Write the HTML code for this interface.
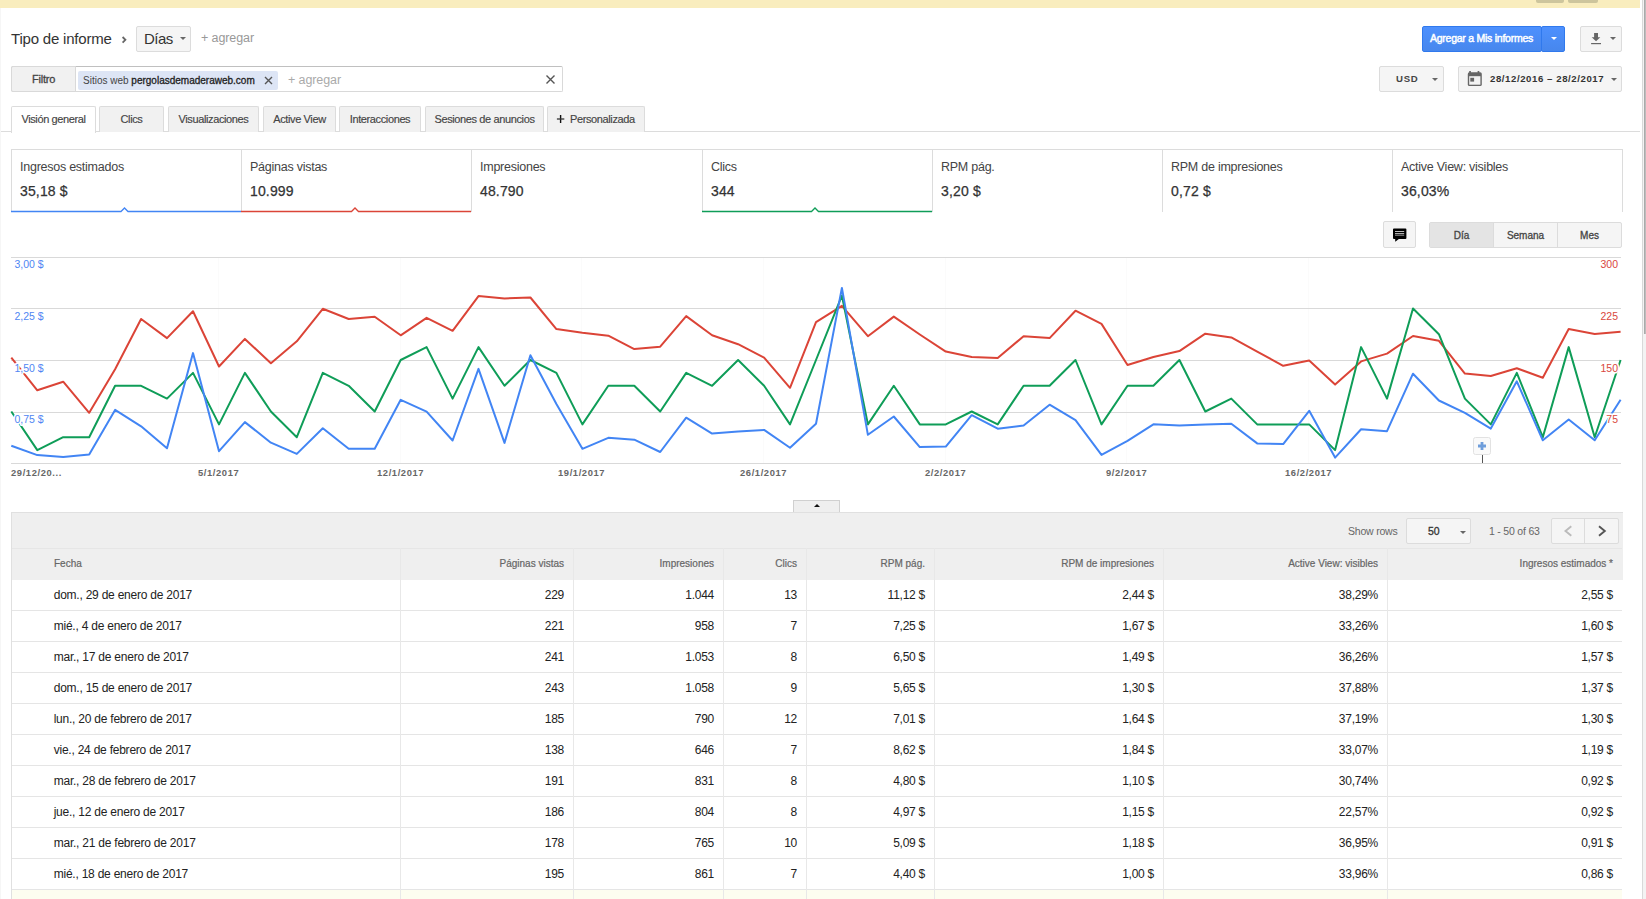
<!DOCTYPE html>
<html><head><meta charset="utf-8">
<style>
*{box-sizing:border-box;margin:0;padding:0}
html,body{width:1646px;height:899px;overflow:hidden;background:#fff;font-family:"Liberation Sans",sans-serif;color:#222}
.a{position:absolute;white-space:nowrap}
.m{-webkit-text-stroke:0.3px currentColor}
.topbar{position:absolute;left:0;top:0;width:1640px;height:8px;background:#f9edbe}
.tbtn{position:absolute;top:-4px;height:7px;background:#cdc59d;border-radius:2px}
.sb{position:absolute;left:1642px;top:0;width:4px;height:899px;background:#f3f3f3;border-left:1px solid #d9d9d9}
.sbthumb{position:absolute;left:1644px;top:0;width:2px;height:334px;background:#bdbdbd;border-left:1px solid #aaa}
.btn{position:absolute;background:#f5f5f5;border:1px solid #dcdcdc;border-radius:2px}
.caret{position:absolute;width:0;height:0;border-left:3px solid transparent;border-right:3px solid transparent;border-top:3.3px solid #666;margin-top:0.7px;margin-left:0.5px}
.tab{position:absolute;top:106px;height:26px;border-radius:2px 2px 0 0;background:#f1f1f1;border:1px solid #dcdcdc;border-bottom:none;font-size:11px;color:#444;text-align:center;line-height:25px;letter-spacing:-0.38px;-webkit-text-stroke:0.15px #444}
.tab.on{background:#fff;height:27px}
.card{position:absolute;top:149px;height:63px;border-left:1px solid #dcdcdc}
.card .l{position:absolute;left:8px;top:11px;font-size:12.5px;color:#444;letter-spacing:-0.25px}
.card .v{position:absolute;left:8px;top:34px;font-size:14px;color:#333;letter-spacing:0.15px;-webkit-text-stroke:0.25px #333}
.ylab{position:absolute;font-size:10.5px;color:#4f86f3;text-shadow:0 0 1px #fff,0 0 1px #fff,0 0 1px #fff,0 0 2px #fff}
.rlab{position:absolute;font-size:10.5px;color:#d9473d;text-align:right;text-shadow:0 0 1px #fff,0 0 1px #fff,0 0 1px #fff,0 0 2px #fff}
.xlab{position:absolute;top:467.2px;font-size:9.4px;font-weight:bold;color:#666;letter-spacing:0.6px}
.tr{position:absolute;left:11px;width:1611px;height:31px;border-bottom:1px solid #e5e5e5;background:#fff}
.tr.hl{background:#fdfdf0}
.td{position:absolute;font-size:12px;line-height:31px;color:#222;letter-spacing:-0.23px}
.td.date{left:53.7px}
.td.num{letter-spacing:-0.25px}
.th{position:absolute;top:548px;line-height:31px;font-size:10px;color:#666;-webkit-text-stroke:0.2px #666}
.vsep{position:absolute;top:548px;width:1px;height:351px;background:#e8e8e8}
</style></head>
<body>
<div class="topbar"></div>
<div class="tbtn" style="left:1536px;width:28px"></div>
<div class="tbtn" style="left:1568px;width:30px"></div>

<!-- header row -->
<div class="a" style="left:11px;top:29px;font-size:15px;color:#333;line-height:20px;letter-spacing:-0.2px">Tipo de informe</div>
<svg style="position:absolute;left:120px;top:34px" width="8" height="11" viewBox="0 0 8 11"><path d="M2.6 3L5.4 5.8L2.6 8.6" fill="none" stroke="#666" stroke-width="1.8"/></svg>
<div class="btn" style="left:136px;top:26px;width:55px;height:26px"></div>
<div class="a" style="left:144px;top:29px;font-size:15px;color:#333;line-height:20px;letter-spacing:-0.5px">Días</div>
<div class="caret" style="left:179.5px;top:36.5px"></div>
<div class="a" style="left:201px;top:30px;font-size:12.5px;color:#999;line-height:16px;letter-spacing:-0.1px">+ agregar</div>

<div style="position:absolute;left:1422px;top:26px;width:120px;height:26px;background:linear-gradient(#4d90fe,#4787ed);border:1px solid #3079ed;border-radius:2px"></div>
<div style="position:absolute;left:1541px;top:26px;width:24px;height:26px;background:linear-gradient(#4d90fe,#4787ed);border:1px solid #3079ed;border-radius:2px"></div>
<div class="a" style="left:1430px;top:31px;font-size:10.5px;color:#fff;line-height:14px;letter-spacing:-0.25px;-webkit-text-stroke:0.45px #fff">Agregar a Mis informes</div>
<div class="caret" style="left:1550.5px;top:36.3px;border-top-color:#fff"></div>
<div class="btn" style="left:1580px;top:26px;width:42px;height:26px"></div>
<svg style="position:absolute;left:1590px;top:31px" width="14" height="16" viewBox="0 0 14 16"><path d="M4.1 2h3.9v4.3h2.3L6.05 10.2L1.7 6.3h2.4z" fill="#666"/><rect x="1.1" y="12" width="9.9" height="1.2" fill="#666"/></svg>
<div class="caret" style="left:1609.3px;top:36px"></div>

<!-- filter row -->
<div style="position:absolute;left:11px;top:66px;width:552px;height:26px;border:1px solid #d9d9d9;border-top-color:#c0c0c0;border-radius:2px;background:#fff"></div>
<div style="position:absolute;left:11px;top:66px;width:65px;height:26px;background:#f1f1f1;border:1px solid #d9d9d9;border-radius:2px 0 0 2px"></div>
<div class="a m" style="left:32px;top:72px;font-size:11px;color:#444;line-height:14px;letter-spacing:-0.2px">Filtro</div>
<div style="position:absolute;left:78px;top:71px;width:200px;height:19px;background:#dde5f5;border-radius:2px"></div>
<div class="a" style="left:83px;top:74px;font-size:10px;color:#444;line-height:13px">Sitios web <span class="m" style="color:#222">pergolasdemaderaweb.com</span></div>
<svg style="position:absolute;left:264px;top:76px" width="9" height="9" viewBox="0 0 9 9"><path d="M1 1L8 8M8 1L1 8" stroke="#555" stroke-width="1.4"/></svg>
<div class="a" style="left:288px;top:72px;font-size:12.5px;color:#aaa;line-height:16px;letter-spacing:-0.1px">+ agregar</div>
<svg style="position:absolute;left:546px;top:75px" width="9" height="9" viewBox="0 0 9 9"><path d="M0.5 0.5L8.5 8.5M8.5 0.5L0.5 8.5" stroke="#555" stroke-width="1.4"/></svg>

<div class="btn" style="left:1379px;top:66px;width:65px;height:26px"></div>
<div class="a" style="left:1396px;top:72px;font-size:9.6px;font-weight:bold;color:#444;line-height:13px;letter-spacing:0.75px">USD</div>
<div class="caret" style="left:1431.3px;top:77px"></div>
<div class="btn" style="left:1458px;top:66px;width:164px;height:26px"></div>
<svg style="position:absolute;left:1467px;top:70px" width="16" height="17" viewBox="0 0 16 17"><rect x="2.2" y="1" width="1.7" height="2.5" fill="#666"/><rect x="10.6" y="1" width="1.7" height="2.5" fill="#666"/><rect x="0.8" y="2.3" width="14" height="13.8" rx="1.6" fill="#666"/><rect x="2.2" y="6.2" width="11.2" height="8.5" fill="#f3f3f3"/><rect x="3.3" y="7.8" width="3.8" height="3.8" fill="#666"/></svg>
<div class="a" style="left:1490px;top:72px;font-size:9.6px;font-weight:bold;color:#333;line-height:13px;letter-spacing:0.58px">28/12/2016 – 28/2/2017</div>
<div class="caret" style="left:1610px;top:77px"></div>

<!-- tabs -->
<div style="position:absolute;left:0;top:131px;width:1640px;height:1px;background:#dcdcdc"></div>
<div style="position:absolute;left:0;top:8px;width:1px;height:891px;background:#f6f6f6"></div>
<div class="tab on" style="left:11px;width:85px">Visión general</div>
<div class="tab" style="left:99px;width:65px">Clics</div>
<div class="tab" style="left:168px;width:91px">Visualizaciones</div>
<div class="tab" style="left:263px;width:73px">Active View</div>
<div class="tab" style="left:339px;width:82px">Interacciones</div>
<div class="tab" style="left:425px;width:119px">Sesiones de anuncios</div>
<div class="tab" style="left:547px;width:98px"></div>
<svg style="position:absolute;left:556px;top:114px" width="9" height="10" viewBox="0 0 9 10"><path d="M4.6 1v8" stroke="#111" stroke-width="1.4"/><path d="M0.9 5h7.4" stroke="#333" stroke-width="1.3"/></svg>
<div class="tab" style="left:570px;width:auto;top:107px;border:none;background:none;text-align:left">Personalizada</div>

<!-- metric cards -->
<div style="position:absolute;left:11px;top:149px;width:1611px;height:1px;background:#dcdcdc"></div>
<div class="card" style="left:11px;width:230px"><div class="l">Ingresos estimados</div><div class="v">35,18 $</div></div>
<div class="card" style="left:241px;width:230px"><div class="l">Páginas vistas</div><div class="v">10.999</div></div>
<div class="card" style="left:471px;width:231px"><div class="l">Impresiones</div><div class="v">48.790</div></div>
<div class="card" style="left:702px;width:230px"><div class="l">Clics</div><div class="v">344</div></div>
<div class="card" style="left:932px;width:230px"><div class="l">RPM pág.</div><div class="v">3,20 $</div></div>
<div class="card" style="left:1162px;width:230px"><div class="l">RPM de impresiones</div><div class="v">0,72 $</div></div>
<div class="card" style="left:1392px;width:231px;border-right:1px solid #dcdcdc"><div class="l">Active View: visibles</div><div class="v">36,03%</div></div>
<svg style="position:absolute;left:0;top:200px" width="1646" height="16">
<path d="M11 11.5H121L124.5 8L128 11.5H241" fill="none" stroke="#4285f4" stroke-width="1.3"/>
<path d="M241 11.5H351.5L355 8L358.5 11.5H471" fill="none" stroke="#db4437" stroke-width="1.3"/>
<path d="M702 11.5H811.5L815 8L818.5 11.5H932" fill="none" stroke="#0f9d58" stroke-width="1.3"/>
</svg>

<!-- chart controls -->
<div class="btn" style="left:1383px;top:221px;width:33px;height:27px"></div>
<svg style="position:absolute;left:1392px;top:227px" width="16" height="16" viewBox="0 0 16 16"><path d="M1.9 1.6h11.6a0.9 0.9 0 0 1 .9.9v8.6a0.9 0.9 0 0 1-.9.9H6.9L3.2 14.8V12H1.9a0.9 0.9 0 0 1-.9-.9V2.5a0.9 0.9 0 0 1 .9-.9z" fill="#000"/><path d="M3 4.5h9.2M3 6.6h9.2" stroke="#d0d0d0" stroke-width="0.9"/><path d="M3 8.2h9.2" stroke="#888" stroke-width="1.1"/></svg>
<div class="btn" style="left:1429px;top:222px;width:193px;height:26px"></div>
<div style="position:absolute;left:1430px;top:223px;width:64px;height:24px;background:#e4e4e4"></div>
<div style="position:absolute;left:1493px;top:222px;width:1px;height:26px;background:#dcdcdc"></div>
<div style="position:absolute;left:1557px;top:222px;width:1px;height:26px;background:#dcdcdc"></div>
<div class="a m" style="left:1430px;top:229px;width:63px;text-align:center;font-size:10px;color:#444;line-height:14px">Día</div>
<div class="a m" style="left:1494px;top:229px;width:63px;text-align:center;font-size:10px;color:#444;line-height:14px">Semana</div>
<div class="a m" style="left:1558px;top:229px;width:63px;text-align:center;font-size:10px;color:#444;line-height:14px">Mes</div>

<!-- chart -->
<svg style="position:absolute;left:0;top:0" width="1646" height="899">
<g fill="#fbfbfb"><rect x="218" y="258" width="1" height="205"/><rect x="400" y="258" width="1" height="205"/><rect x="581" y="258" width="1" height="205"/><rect x="763" y="258" width="1" height="205"/><rect x="945" y="258" width="1" height="205"/><rect x="1126" y="258" width="1" height="205"/><rect x="1308" y="258" width="1" height="205"/></g>
<g fill="#d9d9d9"><rect x="11" y="257" width="1610" height="1"/><rect x="11" y="308" width="1610" height="1"/><rect x="11" y="360" width="1610" height="1"/><rect x="11" y="412" width="1610" height="1"/><rect x="11" y="463" width="1610" height="1"/></g>
<polyline fill="none" stroke="#db4437" stroke-width="2" stroke-linejoin="round" points="11.3,357.7 37.3,390.3 63.2,381.7 89.2,412.8 115.1,369.2 141.1,319.0 167.0,338.1 193.0,311.2 219.0,366.5 244.9,338.9 270.9,363.3 296.8,341.3 322.8,308.8 348.7,319.0 374.7,316.8 400.7,335.3 426.6,317.8 452.6,330.8 478.5,296.1 504.5,298.5 530.4,297.5 556.4,329.1 582.4,332.7 608.3,335.7 634.3,349.1 660.2,346.7 686.2,316.1 712.1,335.2 738.1,344.2 764.1,357.7 790.0,387.8 816.0,322.2 841.9,305.8 867.9,336.2 893.8,316.6 919.8,334.5 945.8,351.6 971.7,357.0 997.7,358.0 1023.6,336.2 1049.6,338.1 1075.5,310.7 1101.5,323.9 1127.5,365.0 1153.4,357.0 1179.4,351.1 1205.3,333.7 1231.3,337.4 1257.2,351.6 1283.2,365.8 1309.2,360.6 1335.1,384.6 1361.1,361.4 1387.0,353.6 1413.0,336.0 1438.9,340.8 1464.9,373.6 1490.8,376.0 1516.8,368.2 1542.8,377.7 1568.7,329.0 1594.7,333.9 1620.6,331.8"/>
<polyline fill="none" stroke="#0f9d58" stroke-width="2" stroke-linejoin="round" points="11.3,411.5 37.3,450.1 63.2,437.2 89.2,437.2 115.1,385.8 141.1,385.8 167.0,398.6 193.0,372.9 219.0,424.4 244.9,372.9 270.9,411.5 296.8,437.2 322.8,372.9 348.7,385.8 374.7,411.5 400.7,360.0 426.6,347.1 452.6,398.6 478.5,347.1 504.5,385.8 530.4,360.0 556.4,372.9 582.4,424.4 608.3,385.8 634.3,385.8 660.2,411.5 686.2,372.9 712.1,385.8 738.1,360.0 764.1,385.8 790.0,424.4 816.0,360.0 841.9,295.6 867.9,424.4 893.8,385.8 919.8,424.4 945.8,424.4 971.7,411.5 997.7,424.4 1023.6,385.8 1049.6,385.8 1075.5,360.0 1101.5,424.4 1127.5,385.8 1153.4,385.8 1179.4,360.0 1205.3,411.5 1231.3,398.6 1257.2,424.4 1283.2,424.4 1309.2,424.4 1335.1,450.1 1361.1,347.1 1387.0,398.6 1413.0,308.5 1438.9,334.2 1464.9,398.6 1490.8,424.4 1516.8,372.9 1542.8,437.2 1568.7,347.1 1594.7,437.2 1620.6,360.0"/>
<polyline fill="none" stroke="#4285f4" stroke-width="2" stroke-linejoin="round" points="11.3,445.8 37.3,455.1 63.2,457.1 89.2,454.4 115.1,409.9 141.1,426.3 167.0,448.3 193.0,353.1 219.0,451.2 244.9,422.1 270.9,442.7 296.8,453.9 322.8,428.2 348.7,448.8 374.7,448.8 400.7,399.8 426.6,411.6 452.6,440.5 478.5,368.9 504.5,442.9 530.4,355.2 556.4,404.0 582.4,448.8 608.3,437.8 634.3,439.7 660.2,452.0 686.2,417.7 712.1,433.6 738.1,431.6 764.1,429.9 790.0,447.8 816.0,423.8 841.9,287.9 867.9,434.8 893.8,416.5 919.8,447.1 945.8,446.6 971.7,415.2 997.7,428.7 1023.6,425.5 1049.6,404.7 1075.5,420.1 1101.5,454.9 1127.5,440.9 1153.4,424.3 1179.4,425.5 1205.3,424.5 1231.3,423.8 1257.2,443.4 1283.2,444.1 1309.2,410.8 1335.1,457.6 1361.1,429.2 1387.0,431.2 1413.0,373.7 1438.9,400.5 1464.9,412.8 1490.8,428.6 1516.8,381.3 1542.8,440.3 1568.7,419.5 1594.7,440.3 1620.6,399.8"/>

<rect x="1473.5" y="437.5" width="17" height="17" rx="2" fill="#fafafa" stroke="#e2e2e2"/>
<path d="M1482 442v8M1478 446h8" stroke="#6f9edb" stroke-width="2.8"/>
<rect x="1482" y="455" width="1" height="8" fill="#555"/>
</svg>
<svg style="position:absolute;left:0;top:0" width="1646" height="899">
<g font-family="Liberation Sans" font-size="10.5" stroke="#fff" stroke-width="3" stroke-linejoin="round" paint-order="stroke">
<g fill="#4f86f3"><text x="14.5" y="268.3">3,00 $</text><text x="14.5" y="320.2">2,25 $</text><text x="14.5" y="371.8">1,50 $</text><text x="14.5" y="422.8">0,75 $</text></g>
<g fill="#d9473d" text-anchor="end"><text x="1618" y="268.3">300</text><text x="1618" y="320.2">225</text><text x="1618" y="371.8">150</text><text x="1618" y="422.8">75</text></g>
</g></svg>
<div class="xlab" style="left:11px">29/12/20...</div>
<div class="xlab" style="left:198px">5/1/2017</div>
<div class="xlab" style="left:377px">12/1/2017</div>
<div class="xlab" style="left:558px">19/1/2017</div>
<div class="xlab" style="left:740px">26/1/2017</div>
<div class="xlab" style="left:925px">2/2/2017</div>
<div class="xlab" style="left:1106px">9/2/2017</div>
<div class="xlab" style="left:1285px">16/2/2017</div>

<!-- table -->
<div style="position:absolute;left:793px;top:500px;width:47px;height:13px;background:#efefef;border:1px solid #d0d0d0;border-bottom:none"></div>
<div style="position:absolute;left:813.5px;top:503.5px;width:0;height:0;border-left:3.5px solid transparent;border-right:3.5px solid transparent;border-bottom:3.5px solid #111"></div>
<div style="position:absolute;left:11px;top:512px;width:1612px;height:68px;background:#efefef;border-top:1px solid #e0e0e0"></div>
<div style="position:absolute;left:11px;top:548px;width:1611px;height:1px;background:#e6e6e6"></div>
<div style="position:absolute;left:11px;top:512px;width:1px;height:387px;background:#e0e0e0"></div>
<div class="a" style="left:1348px;top:523.5px;font-size:10.5px;color:#666;line-height:14px;letter-spacing:-0.2px">Show rows</div>
<div class="btn" style="left:1406px;top:518px;width:65px;height:26px"></div>
<div class="a m" style="left:1428px;top:524px;font-size:10.5px;color:#333;line-height:14px">50</div>
<div class="caret" style="left:1459px;top:530px"></div>
<div class="a" style="left:1489px;top:523.5px;font-size:10.5px;color:#666;line-height:14px;letter-spacing:-0.2px">1 - 50 of 63</div>
<div class="btn" style="left:1551px;top:518px;width:68px;height:26px"></div>
<div style="position:absolute;left:1584px;top:518px;width:1px;height:26px;background:#dcdcdc"></div>
<svg style="position:absolute;left:1560px;top:522px" width="60" height="18" viewBox="0 0 60 18"><path d="M11.3 4.3L5.5 9L11.3 13.7" fill="none" stroke="#bbb" stroke-width="1.9"/><path d="M39 4.3L44.8 9L39 13.7" fill="none" stroke="#555" stroke-width="1.9"/></svg>
<div class="tr" style="top:580px"></div>
<div class="td date" style="top:580px">dom., 29 de enero de 2017</div>
<div class="td num" style="top:580px;right:1082px">229</div>
<div class="td num" style="top:580px;right:932px">1.044</div>
<div class="td num" style="top:580px;right:849px">13</div>
<div class="td num" style="top:580px;right:721px">11,12 $</div>
<div class="td num" style="top:580px;right:492px">2,44 $</div>
<div class="td num" style="top:580px;right:268px">38,29%</div>
<div class="td num" style="top:580px;right:33px">2,55 $</div>
<div class="tr" style="top:611px"></div>
<div class="td date" style="top:611px">mié., 4 de enero de 2017</div>
<div class="td num" style="top:611px;right:1082px">221</div>
<div class="td num" style="top:611px;right:932px">958</div>
<div class="td num" style="top:611px;right:849px">7</div>
<div class="td num" style="top:611px;right:721px">7,25 $</div>
<div class="td num" style="top:611px;right:492px">1,67 $</div>
<div class="td num" style="top:611px;right:268px">33,26%</div>
<div class="td num" style="top:611px;right:33px">1,60 $</div>
<div class="tr" style="top:642px"></div>
<div class="td date" style="top:642px">mar., 17 de enero de 2017</div>
<div class="td num" style="top:642px;right:1082px">241</div>
<div class="td num" style="top:642px;right:932px">1.053</div>
<div class="td num" style="top:642px;right:849px">8</div>
<div class="td num" style="top:642px;right:721px">6,50 $</div>
<div class="td num" style="top:642px;right:492px">1,49 $</div>
<div class="td num" style="top:642px;right:268px">36,26%</div>
<div class="td num" style="top:642px;right:33px">1,57 $</div>
<div class="tr" style="top:673px"></div>
<div class="td date" style="top:673px">dom., 15 de enero de 2017</div>
<div class="td num" style="top:673px;right:1082px">243</div>
<div class="td num" style="top:673px;right:932px">1.058</div>
<div class="td num" style="top:673px;right:849px">9</div>
<div class="td num" style="top:673px;right:721px">5,65 $</div>
<div class="td num" style="top:673px;right:492px">1,30 $</div>
<div class="td num" style="top:673px;right:268px">37,88%</div>
<div class="td num" style="top:673px;right:33px">1,37 $</div>
<div class="tr" style="top:704px"></div>
<div class="td date" style="top:704px">lun., 20 de febrero de 2017</div>
<div class="td num" style="top:704px;right:1082px">185</div>
<div class="td num" style="top:704px;right:932px">790</div>
<div class="td num" style="top:704px;right:849px">12</div>
<div class="td num" style="top:704px;right:721px">7,01 $</div>
<div class="td num" style="top:704px;right:492px">1,64 $</div>
<div class="td num" style="top:704px;right:268px">37,19%</div>
<div class="td num" style="top:704px;right:33px">1,30 $</div>
<div class="tr" style="top:735px"></div>
<div class="td date" style="top:735px">vie., 24 de febrero de 2017</div>
<div class="td num" style="top:735px;right:1082px">138</div>
<div class="td num" style="top:735px;right:932px">646</div>
<div class="td num" style="top:735px;right:849px">7</div>
<div class="td num" style="top:735px;right:721px">8,62 $</div>
<div class="td num" style="top:735px;right:492px">1,84 $</div>
<div class="td num" style="top:735px;right:268px">33,07%</div>
<div class="td num" style="top:735px;right:33px">1,19 $</div>
<div class="tr" style="top:766px"></div>
<div class="td date" style="top:766px">mar., 28 de febrero de 2017</div>
<div class="td num" style="top:766px;right:1082px">191</div>
<div class="td num" style="top:766px;right:932px">831</div>
<div class="td num" style="top:766px;right:849px">8</div>
<div class="td num" style="top:766px;right:721px">4,80 $</div>
<div class="td num" style="top:766px;right:492px">1,10 $</div>
<div class="td num" style="top:766px;right:268px">30,74%</div>
<div class="td num" style="top:766px;right:33px">0,92 $</div>
<div class="tr" style="top:797px"></div>
<div class="td date" style="top:797px">jue., 12 de enero de 2017</div>
<div class="td num" style="top:797px;right:1082px">186</div>
<div class="td num" style="top:797px;right:932px">804</div>
<div class="td num" style="top:797px;right:849px">8</div>
<div class="td num" style="top:797px;right:721px">4,97 $</div>
<div class="td num" style="top:797px;right:492px">1,15 $</div>
<div class="td num" style="top:797px;right:268px">22,57%</div>
<div class="td num" style="top:797px;right:33px">0,92 $</div>
<div class="tr" style="top:828px"></div>
<div class="td date" style="top:828px">mar., 21 de febrero de 2017</div>
<div class="td num" style="top:828px;right:1082px">178</div>
<div class="td num" style="top:828px;right:932px">765</div>
<div class="td num" style="top:828px;right:849px">10</div>
<div class="td num" style="top:828px;right:721px">5,09 $</div>
<div class="td num" style="top:828px;right:492px">1,18 $</div>
<div class="td num" style="top:828px;right:268px">36,95%</div>
<div class="td num" style="top:828px;right:33px">0,91 $</div>
<div class="tr" style="top:859px"></div>
<div class="td date" style="top:859px">mié., 18 de enero de 2017</div>
<div class="td num" style="top:859px;right:1082px">195</div>
<div class="td num" style="top:859px;right:932px">861</div>
<div class="td num" style="top:859px;right:849px">7</div>
<div class="td num" style="top:859px;right:721px">4,40 $</div>
<div class="td num" style="top:859px;right:492px">1,00 $</div>
<div class="td num" style="top:859px;right:268px">33,96%</div>
<div class="td num" style="top:859px;right:33px">0,86 $</div>
<div class="tr hl" style="top:890px"></div>
<div class="th" style="left:54px">Fecha</div>
<div class="th" style="right:1082px">Páginas vistas</div>
<div class="th" style="right:932px">Impresiones</div>
<div class="th" style="right:849px">Clics</div>
<div class="th" style="right:721px">RPM pág.</div>
<div class="th" style="right:492px">RPM de impresiones</div>
<div class="th" style="right:268px">Active View: visibles</div>
<div class="th" style="right:33px">Ingresos estimados *</div>
<div class="vsep" style="left:400px"></div>
<div class="vsep" style="left:573px"></div>
<div class="vsep" style="left:723px"></div>
<div class="vsep" style="left:806px"></div>
<div class="vsep" style="left:934px"></div>
<div class="vsep" style="left:1163px"></div>
<div class="vsep" style="left:1387px"></div>
<div style="position:absolute;left:11px;top:512px;width:1px;height:387px;background:#e0e0e0"></div>

<div class="sb"></div>
<div class="sbthumb"></div>
</body></html>
